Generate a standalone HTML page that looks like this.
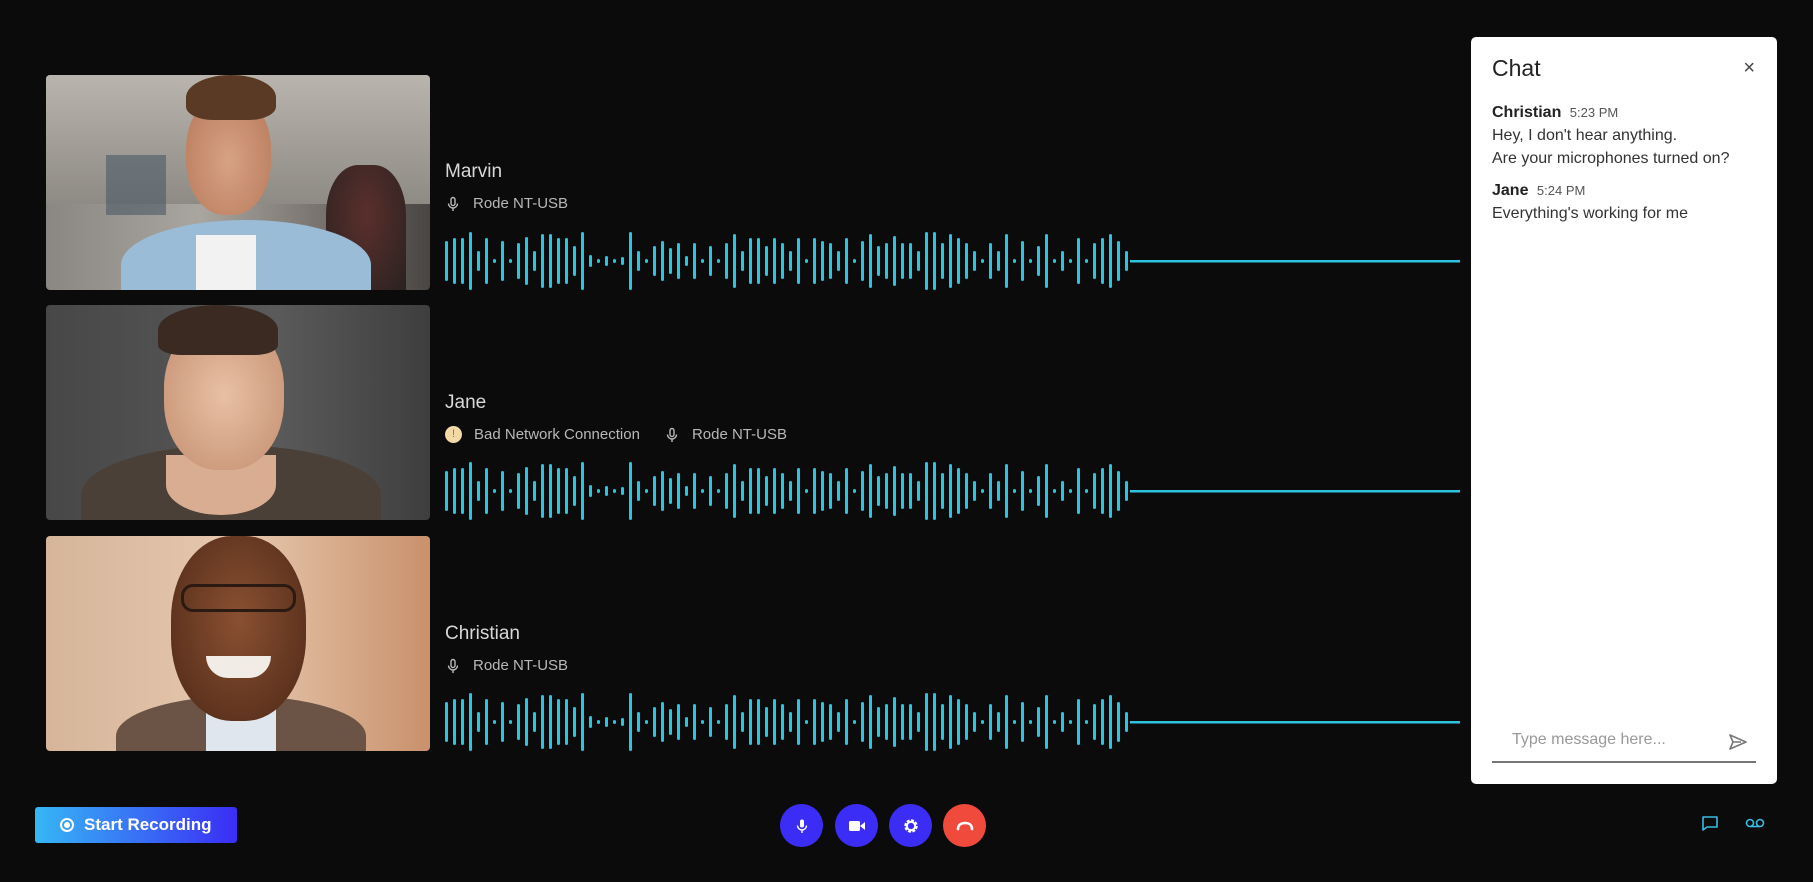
<!DOCTYPE html>
<html><head><meta charset="utf-8"><style>
*{margin:0;padding:0;box-sizing:border-box}
body{width:1813px;height:882px;background:#0b0b0c;font-family:"Liberation Sans",sans-serif;position:relative;overflow:hidden;color:#ddd}
.tile{position:absolute;left:46px;width:384px;height:215px;border-radius:4px;overflow:hidden}
.name{position:absolute;left:445px;font-size:19px;color:#d8d8d8}
.info{position:absolute;left:445px;font-size:15px;color:#b8b8b8;display:flex;align-items:center;gap:8px}
.wave{position:absolute;left:445px;width:1015px;height:64px}
.chat{position:absolute;left:1471px;top:37px;width:306px;height:747px;background:#fff;border-radius:5px;color:#222}
.btn{position:absolute;top:804px;width:43px;height:43px;border-radius:50%;background:#3b2df5;display:flex;align-items:center;justify-content:center}
</style></head><body>
<svg width="0" height="0" style="position:absolute"><defs>
<g id="w" fill="#2ec4e0"></g>
<symbol id="mic" viewBox="0 0 16 16"><rect x="6" y="1.5" width="4" height="8" rx="2" fill="none" stroke="#bbb" stroke-width="1.4"/><path d="M3.5 7.5a4.5 4.5 0 0 0 9 0M8 12v3" fill="none" stroke="#bbb" stroke-width="1.4"/></symbol>
</defs></svg>

<!-- tiles -->
<div class="tile" style="top:75px;background:linear-gradient(90deg,#8a8782 0%,#a9a59f 40%,#7a7570 70%,#4a4644 100%)">
 <div style="position:absolute;left:0;top:0;width:100%;height:60%;background:linear-gradient(180deg,#b9b5ae,#8e8a84)"></div>
 <div style="position:absolute;left:60px;top:80px;width:60px;height:60px;background:#4b5a66;opacity:.6"></div>
 <div style="position:absolute;left:280px;top:90px;width:80px;height:125px;background:radial-gradient(ellipse at 50% 40%,#5a2f2c,#2a2220);border-radius:40% 40% 0 0"></div>
 <div style="position:absolute;left:75px;top:145px;width:250px;height:90px;background:#9bbcd6;border-radius:50% 50% 0 0"></div>
 <div style="position:absolute;left:150px;top:160px;width:60px;height:60px;background:#f2f2f2"></div>
 <div style="position:absolute;left:140px;top:20px;width:85px;height:120px;background:radial-gradient(ellipse at 50% 55%,#d7a284,#b57858);border-radius:45%"></div>
 <div style="position:absolute;left:140px;top:0;width:90px;height:45px;background:#5a3a24;border-radius:50% 50% 30% 30%"></div>
</div>
<div class="tile" style="top:305px;background:linear-gradient(90deg,#474747,#5a5a5a 60%,#3e3e3e)">
 <div style="position:absolute;left:35px;top:140px;width:300px;height:100px;background:#4a4038;border-radius:50% 50% 0 0"></div>
 <div style="position:absolute;left:120px;top:150px;width:110px;height:60px;background:#d8ad92;border-radius:0 0 50% 50%"></div>
 <div style="position:absolute;left:118px;top:15px;width:120px;height:150px;background:radial-gradient(ellipse at 50% 50%,#e8c0a4,#c48e70);border-radius:45%"></div>
 <div style="position:absolute;left:112px;top:0;width:120px;height:50px;background:#3a2a22;border-radius:50% 50% 20% 20%"></div>
</div>
<div class="tile" style="top:536px;background:linear-gradient(90deg,#d6b59a,#e6c8ae 50%,#c9916c)">
 <div style="position:absolute;left:70px;top:160px;width:250px;height:80px;background:#6b5446;border-radius:50% 50% 0 0"></div>
 <div style="position:absolute;left:160px;top:165px;width:70px;height:50px;background:#dfe6ee"></div>
 <div style="position:absolute;left:125px;top:0;width:135px;height:185px;background:radial-gradient(ellipse at 50% 45%,#8a5032,#4d2816);border-radius:45%"></div>
 <div style="position:absolute;left:135px;top:48px;width:115px;height:28px;border:3px solid #2a1a12;border-radius:12px"></div>
 <div style="position:absolute;left:160px;top:120px;width:65px;height:22px;background:#f2ece6;border-radius:0 0 30px 30px"></div>
</div>

<!-- names -->
<div class="name" style="top:161px">Marvin</div>
<div class="info" style="top:195px"><svg width="16" height="16"><use href="#mic"/></svg><span style="margin-left:4px">Rode NT-USB</span></div>
<div class="name" style="top:392px">Jane</div>
<div class="info" style="top:426px"><span style="display:inline-block;width:17px;height:17px;border-radius:50%;background:#f2d9a6;color:#a66;font-size:11px;text-align:center;line-height:17px">!</span><span style="margin-left:4px">Bad Network Connection</span><svg width="16" height="16" style="margin-left:16px"><use href="#mic"/></svg><span style="margin-left:4px">Rode NT-USB</span></div>
<div class="name" style="top:623px">Christian</div>
<div class="info" style="top:657px"><svg width="16" height="16"><use href="#mic"/></svg><span style="margin-left:4px">Rode NT-USB</span></div>

<svg class="wave" style="top:229px" id="w1"></svg>
<svg class="wave" style="top:459px" id="w2"></svg>
<svg class="wave" style="top:690px" id="w3"></svg>
<script>
var h=[40,46,46,58,20,46,4,40,4,36,48,20,54,54,46,46,30,58,12,4,10,4,8,58,20,4,30,40,26,36,10,36,4,30,4,36,54,20,46,46,30,46,36,20,46,4,46,40,36,20,46,4,40,54,30,36,50,36,36,20,58,58,36,54,46,36,20,4,36,20,54,4,40,4,30,54,4,20,4,46,4,36,46,54,40,20];
var s='';for(var i=0;i<h.length;i++){var x=i*8;s+='<rect x="'+x+'" y="'+(32-h[i]/2)+'" width="3" height="'+h[i]+'" rx="1.5" fill="#2ec4e0"/>';}
s+='<rect x="685" y="31" width="330" height="2.5" fill="#2ec4e0"/>';
['w1','w2','w3'].forEach(function(id){document.getElementById(id).innerHTML=s;});
</script>

<!-- chat -->
<div class="chat">
 <div style="position:absolute;left:21px;top:18px;font-size:23px;color:#222">Chat</div>
 <div style="position:absolute;right:22px;top:20px;font-size:20px;color:#444">×</div>
 <div style="position:absolute;left:21px;top:64px;font-size:16px;line-height:23px;color:#333">
  <div><b style="color:#222">Christian</b> <span style="font-size:13px;color:#555;margin-left:4px">5:23 PM</span></div>
  <div>Hey, I don't hear anything.</div>
  <div>Are your microphones turned on?</div>
  <div style="margin-top:9px"><b style="color:#222">Jane</b> <span style="font-size:13px;color:#555;margin-left:4px">5:24 PM</span></div>
  <div>Everything's working for me</div>
 </div>
 <div style="position:absolute;left:21px;right:21px;top:686px;height:40px;border-bottom:2px solid #777">
  <span style="position:absolute;left:20px;top:8px;font-size:16px;color:#999">Type message here...</span>
  <svg style="position:absolute;right:8px;top:10px" width="20" height="18" viewBox="0 0 20 18"><path d="M2 2l16 7-16 7 3-7z M5 9h8" fill="none" stroke="#777" stroke-width="1.6" stroke-linejoin="round"/></svg>
 </div>
</div>

<!-- bottom -->
<div style="position:absolute;left:35px;top:807px;width:202px;height:36px;border-radius:3px;background:linear-gradient(90deg,#36b7f5,#3b2df5);display:flex;align-items:center;padding-left:25px;color:#fff;font-weight:bold;font-size:17px">
 <span style="display:inline-block;width:14px;height:14px;border:2px solid #fff;border-radius:50%;margin-right:10px;position:relative"><span style="position:absolute;left:2px;top:2px;width:6px;height:6px;background:#fff;border-radius:50%"></span></span>Start Recording</div>
<div class="btn" style="left:780px"><svg width="16" height="18" viewBox="0 0 16 16"><rect x="6" y="1.5" width="4" height="8" rx="2" fill="#fff"/><path d="M3.5 7.5a4.5 4.5 0 0 0 9 0M8 12v3" fill="none" stroke="#fff" stroke-width="1.4"/></svg></div>
<div class="btn" style="left:835px"><svg width="16" height="12" viewBox="0 0 16 12"><rect x="0" y="1" width="11" height="10" rx="1.5" fill="#fff"/><path d="M11 6l5-4v8z" fill="#fff"/></svg></div>
<div class="btn" style="left:889px"><svg width="16" height="16" viewBox="0 0 16 16"><circle cx="8" cy="8" r="5" fill="none" stroke="#fff" stroke-width="3.5" stroke-dasharray="2.6 1.3"/><circle cx="8" cy="8" r="4.2" fill="none" stroke="#fff" stroke-width="2"/></svg></div>
<div class="btn" style="left:943px;background:#f04a3c"><svg width="18" height="10" viewBox="0 0 18 10"><path d="M2 8c0-4 3-6 7-6s7 2 7 6" fill="none" stroke="#fff" stroke-width="2.6" stroke-linecap="round"/></svg></div>
<svg style="position:absolute;left:1701px;top:815px" width="18" height="17" viewBox="0 0 18 17"><path d="M2 2h14v10H6l-4 3z" fill="none" stroke="#38bde0" stroke-width="1.6" stroke-linejoin="round"/></svg>
<svg style="position:absolute;left:1745px;top:817px" width="20" height="12" viewBox="0 0 20 12"><circle cx="5" cy="6" r="3.5" fill="none" stroke="#38bde0" stroke-width="1.6"/><circle cx="15" cy="6" r="3.5" fill="none" stroke="#38bde0" stroke-width="1.6"/><path d="M5 9.5h10" stroke="#38bde0" stroke-width="1.6"/></svg>
</body></html>
